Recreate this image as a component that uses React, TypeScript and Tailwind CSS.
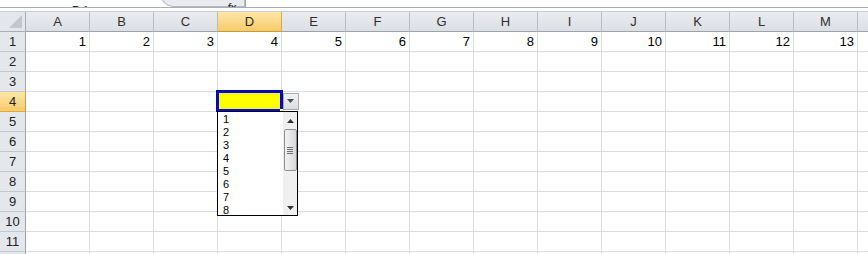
import React from "react";

const cols = ["A", "B", "C", "D", "E", "F", "G", "H", "I", "J", "K", "L", "M", "N"];
const rows = Array.from({ length: 12 }, (_, i) => i + 1);

export default function App() {
  return (
    <div
      className="relative w-[868px] h-[254px] overflow-hidden bg-white text-[#222]"
      style={{ fontFamily: '"Liberation Sans", Arial, sans-serif' }}
    >
      {/* formula bar remnant */}
      <div className="relative h-[8px] overflow-hidden border-b border-[#a9adb3]">
        <div className="flex h-full items-end">
          <div className="w-[160px] flex justify-center">
            <span className="text-[13px] leading-[13px] translate-y-[10px]">D4</span>
          </div>
          <div className="w-[85px] h-[14px] -mt-[7px] rounded-bl-[14px] border border-[#b5b9be] bg-[#e9ebee] flex justify-end items-end pr-[8px] self-start">
            <span className="text-[11px] italic leading-[11px] translate-y-[7px]">fx</span>
          </div>
          <div className="w-px h-full bg-[#9ea3a9]" />
        </div>
      </div>
      <div className="h-[4px] border-b border-[#c9cdd2] bg-white" />

      {/* grid */}
      <div className="grid grid-cols-[26px_repeat(14,64px)] auto-rows-[20px]">
        {/* header row */}
        <div className="h-[20px] bg-[#e3e6ea] border-r border-b border-[#a8adb3] relative">
          <div className="absolute right-[3px] bottom-[3px] w-0 h-0 border-l-[13px] border-l-transparent border-b-[13px] border-b-[#c3c7cc]" />
        </div>
        {cols.map((c) => (
          <div
            key={c}
            className={
              "h-[20px] flex items-center justify-center text-[13px] border-r border-b " +
              (c === "D"
                ? "bg-gradient-to-b from-[#fde7a8] to-[#f6cb68] border-r-[#e1a940] border-b-[#c69a42] text-[#2a2a2a]"
                : "bg-gradient-to-b from-[#eaecef] to-[#dcdfe4] border-r-[#b9bdc3] border-b-[#9ea3a9] text-[#2f2f2f]")
            }
          >
            {c}
          </div>
        ))}

        {rows.map((r) => (
          <React.Fragment key={r}>
            <div
              className={
                "flex items-center justify-center text-[13px] border-r border-b " +
                (r === 4
                  ? "bg-gradient-to-b from-[#fde7a8] to-[#f6cb68] border-r-[#c69a42] border-b-[#e1a940]"
                  : "bg-[#e4e7eb] border-r-[#9ea3a9] border-b-[#c3c7cc]")
              }
            >
              {r}
            </div>
            {cols.map((c, ci) => (
              <div
                key={c}
                className="border-r border-b border-[#dadcdd] flex items-center justify-end pr-[3px] text-[13px] text-black"
              >
                {r === 1 && ci < 13 ? ci + 1 : ""}
              </div>
            ))}
          </React.Fragment>
        ))}
      </div>

      {/* selected cell D4 */}
      <div className="absolute left-[216px] top-[90px] w-[67px] h-[22px] border border-[#10106a] bg-[#0000ff] p-[2px]">
        <div className="w-full h-full bg-[#ffff00]" />
        <div className="absolute right-[-3px] bottom-[-3px] w-[5px] h-[5px] bg-[#ffff00] border border-white" />
      </div>

      {/* dropdown arrow button */}
      <div className="absolute left-[283px] top-[93px] w-[16px] h-[17px] border border-[#a6abb1] bg-gradient-to-b from-[#f2f3f5] to-[#d9dce0] flex items-center justify-center">
        <svg width="8" height="5" viewBox="0 0 8 5">
          <path d="M0 0 L7 0 L3.5 4 Z" fill="#4a4f55" />
        </svg>
      </div>

      {/* list */}
      <div className="absolute left-[217px] top-[111px] w-[81px] h-[105px] border border-black bg-white flex">
        <div className="flex-1 pl-[5px] pt-[1px] flex flex-col text-[11px] text-black">
          {[1, 2, 3, 4, 5, 6, 7, 8].map((n) => (
            <div key={n} className="h-[13px] leading-[13px]">
              {n}
            </div>
          ))}
        </div>
        <div className="w-[14px] h-full bg-[#f0f0f0] flex flex-col items-center">
          <div className="h-[17px] w-full flex items-center justify-center">
            <svg width="7" height="4" viewBox="0 0 7 4">
              <path d="M3.5 0 L7 4 L0 4 Z" fill="#333" />
            </svg>
          </div>
          <div className="w-[13px] h-[42px] rounded-[2px] border border-[#8c9096] bg-gradient-to-r from-[#f3f3f3] to-[#d8d8d8] flex flex-col items-center justify-center gap-[1px]">
            {[0, 1, 2, 3].map((i) => (
              <div key={i} className="w-[6px] h-px bg-[#6b6f74]" />
            ))}
          </div>
          <div className="flex-1" />
          <div className="h-[14px] w-full flex items-center justify-center">
            <svg width="7" height="4" viewBox="0 0 7 4">
              <path d="M0 0 L7 0 L3.5 4 Z" fill="#333" />
            </svg>
          </div>
        </div>
      </div>
    </div>
  );
}
